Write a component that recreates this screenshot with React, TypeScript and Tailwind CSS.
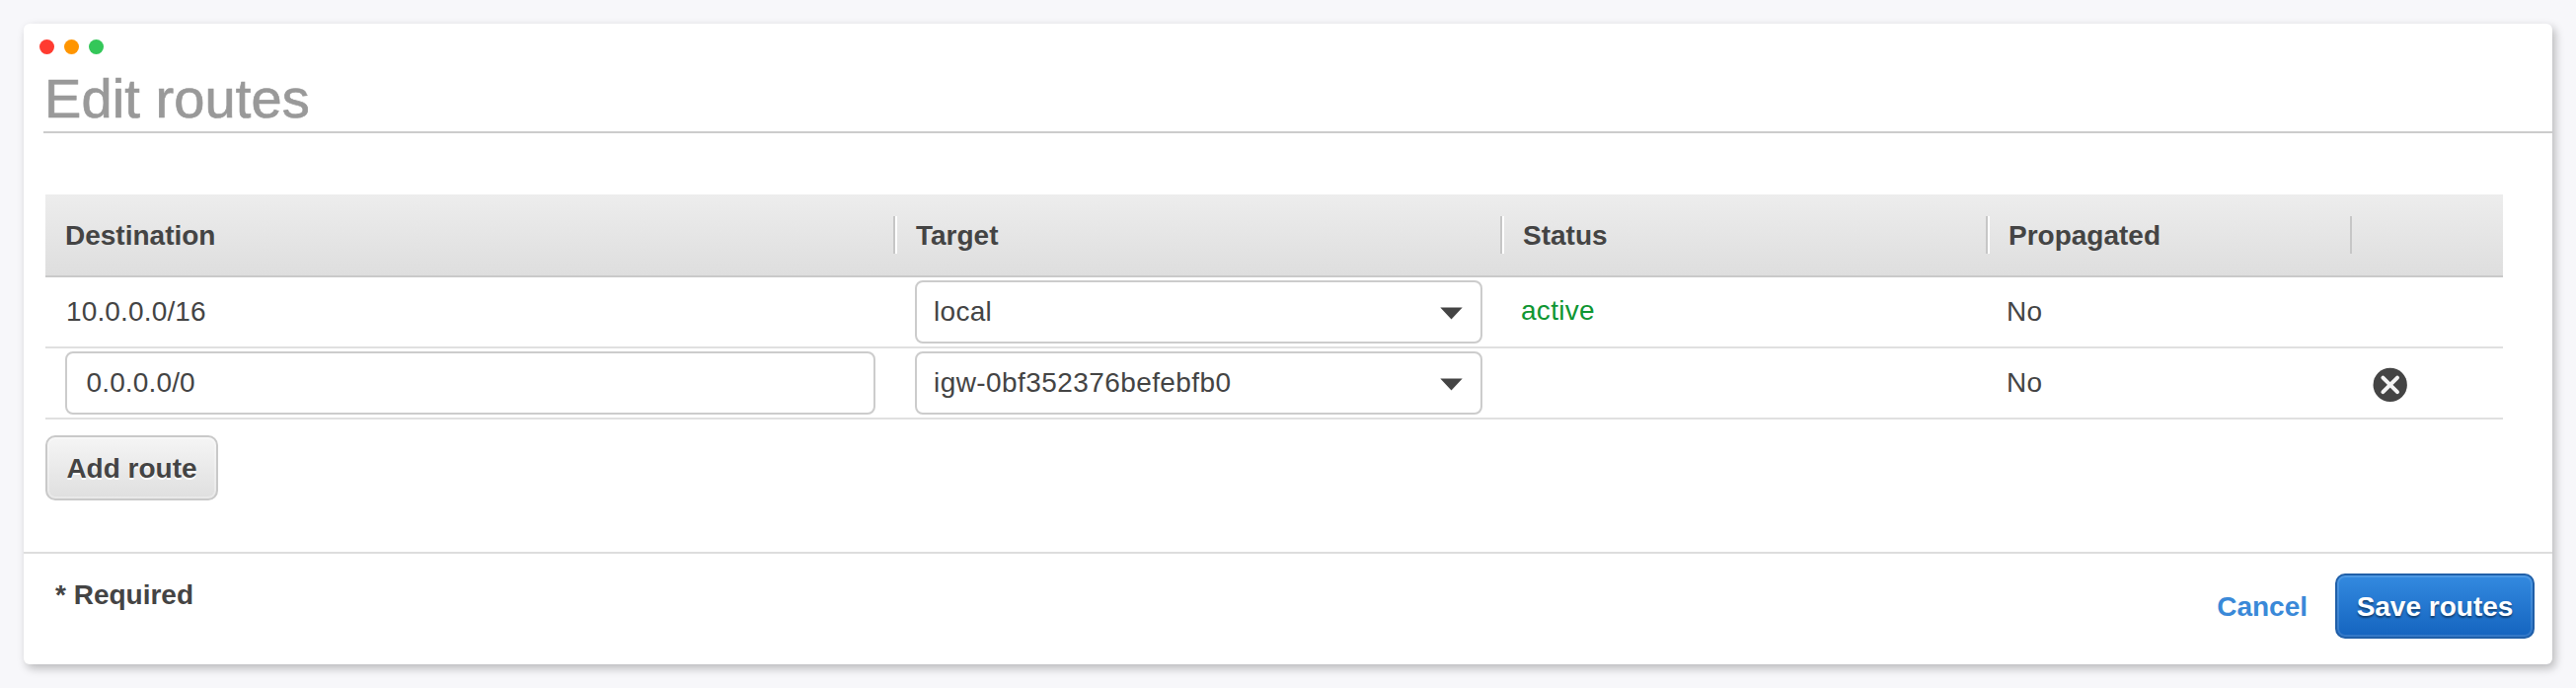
import type { ReactNode } from 'react';

const columns = 'grid grid-cols-[859px_615px_492px_369px_155px]';

function Divider({ highlight = true }: { highlight?: boolean }) {
  return (
    <span className="flex h-[38px] w-1 shrink-0">
      <span className="w-0.5 bg-[#c6c6c6]" />
      {highlight && <span className="w-0.5 bg-white" />}
    </span>
  );
}

function HeaderCell({ label }: { label: string }) {
  return (
    <div className="flex items-center">
      <Divider />
      <span className="pl-[19px] pt-0.5">{label}</span>
    </div>
  );
}

function Select({ value, spacing = '' }: { value: string; spacing?: string }) {
  return (
    <button
      type="button"
      className="ml-[22px] flex h-16 w-[575px] items-center justify-between rounded-lg border-2 border-[#cccccc] bg-white pl-[17px] pr-[18px] text-left"
    >
      <span className={spacing}>{value}</span>
      <svg width="23" height="13" viewBox="0 0 23 13" aria-hidden="true" className="mt-0.5">
        <path d="M0.3 0.5H22.7L11.5 12.6Z" fill="#444444" />
      </svg>
    </button>
  );
}

function Row({
  destination,
  target,
  status,
  removable = false,
}: {
  destination: ReactNode;
  target: ReactNode;
  status?: string;
  removable?: boolean;
}) {
  return (
    <div className={`${columns} h-[72px] items-center border-b-2 border-[#e0e0e0]`}>
      <div className="pl-[21px] tracking-[0.15px]">{destination}</div>
      {target}
      <div className="pb-0.5 pl-[21px] tracking-[0.3px] text-[#0f9633]">{status}</div>
      <div className="pl-[21px] tracking-[0.2px]">No</div>
      <div className="pl-[23px] pt-1">
        {removable && (
          <button type="button" aria-label="Remove route" className="block">
            <svg width="36" height="36" viewBox="0 0 36 36">
              <circle cx="17.7" cy="17.9" r="17.2" fill="#444444" />
              <path
                d="M10.4 10.6L25 25.2M25 10.6L10.4 25.2"
                stroke="#f4f4f4"
                strokeWidth="4"
                strokeLinecap="round"
              />
            </svg>
          </button>
        )}
      </div>
    </div>
  );
}

export default function App() {
  return (
    <div className="h-[697px] w-[2610px] bg-[#f7f7fa] p-6 font-['Liberation_Sans',Arial,sans-serif] text-[28px] leading-8 text-[#444444]">
      <main className="flex h-[649px] w-[2562px] flex-col rounded-md bg-white shadow-[3px_4px_10px_rgba(0,0,0,0.26)]">
        <div className="flex gap-2.5 pl-4 pt-4">
          <span className="size-[15px] rounded-full bg-[#ff3b30]" />
          <span className="size-[15px] rounded-full bg-[#ff9500]" />
          <span className="size-[15px] rounded-full bg-[#34c759]" />
        </div>
        <h1 className="ml-5 mt-[13px] h-[67px] border-b-2 border-[#cccccc] pl-px text-[56px] leading-[64px] tracking-[0.1px] text-[#999999] [-webkit-text-stroke:0.7px_#999999]">
          Edit routes
        </h1>

        <section className="ml-[22px] mt-[62px] w-[2490px]">
          <div
            className={`${columns} h-[84px] border-b-2 border-[#c9c9c9] bg-linear-to-b from-[#ededed] to-[#dedede] font-bold`}
          >
            <div className="flex items-center pl-5 pt-0.5">Destination</div>
            <HeaderCell label="Target" />
            <HeaderCell label="Status" />
            <HeaderCell label="Propagated" />
            <div className="flex items-center">
              <Divider highlight={false} />
            </div>
          </div>
          <Row
            destination="10.0.0.0/16"
            target={<Select value="local" spacing="tracking-[0.3px]" />}
            status="active"
          />
          <Row
            destination={
              <input
                aria-label="Destination"
                defaultValue="0.0.0.0/0"
                className="-ml-px block h-16 w-[821px] rounded-lg border-2 border-[#cccccc] bg-white px-[19.5px] tracking-[0.15px]"
              />
            }
            target={<Select value="igw-0bf352376befebfb0" spacing="tracking-[0.42px]" />}
            removable
          />
          <button
            type="button"
            className="mt-4 flex h-[66px] w-[175px] items-center justify-center rounded-[10px] border-2 border-[#c9c9c9] bg-linear-to-b from-[#f5f5f5] to-[#dfdfdf] pt-0.5 font-bold shadow-[inset_0_0_0_2px_rgba(255,255,255,0.3)] [text-shadow:0_2px_0_#fff]"
          >
            Add route
          </button>
        </section>

        <footer className="mt-[52px] flex flex-1 items-start border-t-2 border-[#dddddd] pl-8 pr-[18px] font-bold">
          <span className="pt-[26px]">* Required</span>
          <button type="button" className="ml-auto mr-7 mt-[38px] text-[#3a89d8]">
            Cancel
          </button>
          <button
            type="button"
            className="mt-5 flex h-[66px] w-[202px] items-center justify-center rounded-[10px] border-2 border-[#205fa8] bg-linear-to-b from-[#338ae0] to-[#1464bf] pt-0.5 text-white shadow-[inset_0_0_0_2px_rgba(255,255,255,0.13)] [text-shadow:0_2px_2px_rgba(0,0,0,0.45)]"
          >
            Save routes
          </button>
        </footer>
      </main>
    </div>
  );
}
